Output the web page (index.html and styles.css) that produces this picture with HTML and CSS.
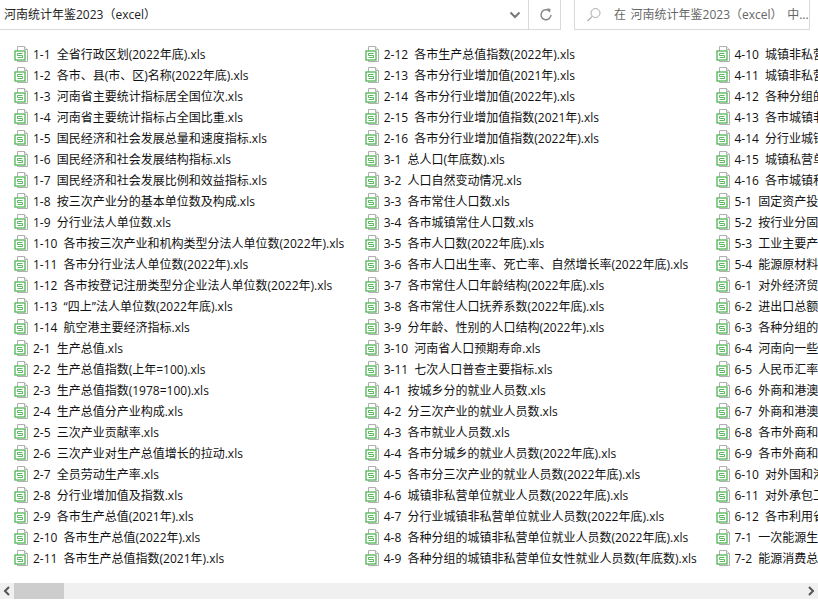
FILE: index.html
```html
<!DOCTYPE html>
<html lang="zh-CN">
<head>
<meta charset="utf-8">
<title>河南统计年鉴2023（excel）</title>
<link rel="stylesheet" href="styles.css">
</head>
<body>
<svg class="defs" width="0" height="0" aria-hidden="true">
  <symbol id="xls" viewBox="0 0 16 16">
    <path d="M3.5 .5H10.5L13.5 3.5V15.5H3.5Z" fill="#fff" stroke="#b0b0b0"/>
    <path d="M10.5 .5V3.5H13.5" fill="#f0f0f0" stroke="#b0b0b0"/>
    <rect x="1" y="5" width="10" height="9" fill="#fff" stroke="#4fb554" stroke-width="1.3"/>
    <path d="M8.5 7.5H3.5V9.5H8.5V11.5H3.5" fill="none" stroke="#5cb560"/>
  </symbol>
</svg>
<div class="window">
  <header class="toolbar">
    <div class="address">
      <span class="path">河南统计年鉴2023（excel）</span>
      <span class="dropdown"><svg width="12" height="8" viewBox="0 0 12 8"><path d="M1.5 1.5L6 6L10.5 1.5" fill="none" stroke="#777" stroke-width="2"/></svg></span>
      <span class="refresh"><svg width="14" height="14" viewBox="0 0 14 14"><path d="M10.6 3.2A5 5 0 1 0 12 7" fill="none" stroke="#888" stroke-width="1.5"/><path d="M7.5 .5L11.5 .8L11 4.8Z" fill="#888"/></svg></span>
    </div>
    <div class="search">
      <svg width="16" height="16" viewBox="0 0 16 16"><circle cx="9.5" cy="6" r="4.5" fill="none" stroke="#aaa"/><path d="M6.2 9.3L1.5 14" stroke="#aaa" stroke-width="1.2"/></svg>
      <span class="hint">在 河南统计年鉴2023（excel） 中...</span>
    </div>
  </header>
  <main class="files">
    <div class="file"><svg class="icon"><use href="#xls"/></svg><span>1-1 全省行政区划(2022年底).xls</span></div>
    <div class="file"><svg class="icon"><use href="#xls"/></svg><span>1-2 各市、县(市、区)名称(2022年底).xls</span></div>
    <div class="file"><svg class="icon"><use href="#xls"/></svg><span>1-3 河南省主要统计指标居全国位次.xls</span></div>
    <div class="file"><svg class="icon"><use href="#xls"/></svg><span>1-4 河南省主要统计指标占全国比重.xls</span></div>
    <div class="file"><svg class="icon"><use href="#xls"/></svg><span>1-5 国民经济和社会发展总量和速度指标.xls</span></div>
    <div class="file"><svg class="icon"><use href="#xls"/></svg><span>1-6 国民经济和社会发展结构指标.xls</span></div>
    <div class="file"><svg class="icon"><use href="#xls"/></svg><span>1-7 国民经济和社会发展比例和效益指标.xls</span></div>
    <div class="file"><svg class="icon"><use href="#xls"/></svg><span>1-8 按三次产业分的基本单位数及构成.xls</span></div>
    <div class="file"><svg class="icon"><use href="#xls"/></svg><span>1-9 分行业法人单位数.xls</span></div>
    <div class="file"><svg class="icon"><use href="#xls"/></svg><span>1-10 各市按三次产业和机构类型分法人单位数(2022年).xls</span></div>
    <div class="file"><svg class="icon"><use href="#xls"/></svg><span>1-11 各市分行业法人单位数(2022年).xls</span></div>
    <div class="file"><svg class="icon"><use href="#xls"/></svg><span>1-12 各市按登记注册类型分企业法人单位数(2022年).xls</span></div>
    <div class="file"><svg class="icon"><use href="#xls"/></svg><span>1-13 “四上”法人单位数(2022年底).xls</span></div>
    <div class="file"><svg class="icon"><use href="#xls"/></svg><span>1-14 航空港主要经济指标.xls</span></div>
    <div class="file"><svg class="icon"><use href="#xls"/></svg><span>2-1 生产总值.xls</span></div>
    <div class="file"><svg class="icon"><use href="#xls"/></svg><span>2-2 生产总值指数(上年=100).xls</span></div>
    <div class="file"><svg class="icon"><use href="#xls"/></svg><span>2-3 生产总值指数(1978=100).xls</span></div>
    <div class="file"><svg class="icon"><use href="#xls"/></svg><span>2-4 生产总值分产业构成.xls</span></div>
    <div class="file"><svg class="icon"><use href="#xls"/></svg><span>2-5 三次产业贡献率.xls</span></div>
    <div class="file"><svg class="icon"><use href="#xls"/></svg><span>2-6 三次产业对生产总值增长的拉动.xls</span></div>
    <div class="file"><svg class="icon"><use href="#xls"/></svg><span>2-7 全员劳动生产率.xls</span></div>
    <div class="file"><svg class="icon"><use href="#xls"/></svg><span>2-8 分行业增加值及指数.xls</span></div>
    <div class="file"><svg class="icon"><use href="#xls"/></svg><span>2-9 各市生产总值(2021年).xls</span></div>
    <div class="file"><svg class="icon"><use href="#xls"/></svg><span>2-10 各市生产总值(2022年).xls</span></div>
    <div class="file"><svg class="icon"><use href="#xls"/></svg><span>2-11 各市生产总值指数(2021年).xls</span></div>

    <div class="file"><svg class="icon"><use href="#xls"/></svg><span>2-12 各市生产总值指数(2022年).xls</span></div>
    <div class="file"><svg class="icon"><use href="#xls"/></svg><span>2-13 各市分行业增加值(2021年).xls</span></div>
    <div class="file"><svg class="icon"><use href="#xls"/></svg><span>2-14 各市分行业增加值(2022年).xls</span></div>
    <div class="file"><svg class="icon"><use href="#xls"/></svg><span>2-15 各市分行业增加值指数(2021年).xls</span></div>
    <div class="file"><svg class="icon"><use href="#xls"/></svg><span>2-16 各市分行业增加值指数(2022年).xls</span></div>
    <div class="file"><svg class="icon"><use href="#xls"/></svg><span>3-1 总人口(年底数).xls</span></div>
    <div class="file"><svg class="icon"><use href="#xls"/></svg><span>3-2 人口自然变动情况.xls</span></div>
    <div class="file"><svg class="icon"><use href="#xls"/></svg><span>3-3 各市常住人口数.xls</span></div>
    <div class="file"><svg class="icon"><use href="#xls"/></svg><span>3-4 各市城镇常住人口数.xls</span></div>
    <div class="file"><svg class="icon"><use href="#xls"/></svg><span>3-5 各市人口数(2022年底).xls</span></div>
    <div class="file"><svg class="icon"><use href="#xls"/></svg><span>3-6 各市人口出生率、死亡率、自然增长率(2022年底).xls</span></div>
    <div class="file"><svg class="icon"><use href="#xls"/></svg><span>3-7 各市常住人口年龄结构(2022年底).xls</span></div>
    <div class="file"><svg class="icon"><use href="#xls"/></svg><span>3-8 各市常住人口抚养系数(2022年底).xls</span></div>
    <div class="file"><svg class="icon"><use href="#xls"/></svg><span>3-9 分年龄、性别的人口结构(2022年).xls</span></div>
    <div class="file"><svg class="icon"><use href="#xls"/></svg><span>3-10 河南省人口预期寿命.xls</span></div>
    <div class="file"><svg class="icon"><use href="#xls"/></svg><span>3-11 七次人口普查主要指标.xls</span></div>
    <div class="file"><svg class="icon"><use href="#xls"/></svg><span>4-1 按城乡分的就业人员数.xls</span></div>
    <div class="file"><svg class="icon"><use href="#xls"/></svg><span>4-2 分三次产业的就业人员数.xls</span></div>
    <div class="file"><svg class="icon"><use href="#xls"/></svg><span>4-3 各市就业人员数.xls</span></div>
    <div class="file"><svg class="icon"><use href="#xls"/></svg><span>4-4 各市分城乡的就业人员数(2022年底).xls</span></div>
    <div class="file"><svg class="icon"><use href="#xls"/></svg><span>4-5 各市分三次产业的就业人员数(2022年底).xls</span></div>
    <div class="file"><svg class="icon"><use href="#xls"/></svg><span>4-6 城镇非私营单位就业人员数(2022年底).xls</span></div>
    <div class="file"><svg class="icon"><use href="#xls"/></svg><span>4-7 分行业城镇非私营单位就业人员数(2022年底).xls</span></div>
    <div class="file"><svg class="icon"><use href="#xls"/></svg><span>4-8 各种分组的城镇非私营单位就业人员数(2022年底).xls</span></div>
    <div class="file"><svg class="icon"><use href="#xls"/></svg><span>4-9 各种分组的城镇非私营单位女性就业人员数(年底数).xls</span></div>

    <div class="file"><svg class="icon"><use href="#xls"/></svg><span>4-10 城镇非私营单位</span></div>
    <div class="file"><svg class="icon"><use href="#xls"/></svg><span>4-11 城镇非私营单位</span></div>
    <div class="file"><svg class="icon"><use href="#xls"/></svg><span>4-12 各种分组的城镇</span></div>
    <div class="file"><svg class="icon"><use href="#xls"/></svg><span>4-13 各市城镇非私营</span></div>
    <div class="file"><svg class="icon"><use href="#xls"/></svg><span>4-14 分行业城镇私营</span></div>
    <div class="file"><svg class="icon"><use href="#xls"/></svg><span>4-15 城镇私营单位就</span></div>
    <div class="file"><svg class="icon"><use href="#xls"/></svg><span>4-16 各市城镇私营单</span></div>
    <div class="file"><svg class="icon"><use href="#xls"/></svg><span>5-1 固定资产投资主要</span></div>
    <div class="file"><svg class="icon"><use href="#xls"/></svg><span>5-2 按行业分固定资产</span></div>
    <div class="file"><svg class="icon"><use href="#xls"/></svg><span>5-3 工业主要产品产量</span></div>
    <div class="file"><svg class="icon"><use href="#xls"/></svg><span>5-4 能源原材料工业</span></div>
    <div class="file"><svg class="icon"><use href="#xls"/></svg><span>6-1 对外经济贸易主要</span></div>
    <div class="file"><svg class="icon"><use href="#xls"/></svg><span>6-2 进出口总额及增长</span></div>
    <div class="file"><svg class="icon"><use href="#xls"/></svg><span>6-3 各种分组的进出口</span></div>
    <div class="file"><svg class="icon"><use href="#xls"/></svg><span>6-4 河南向一些国家</span></div>
    <div class="file"><svg class="icon"><use href="#xls"/></svg><span>6-5 人民币汇率变化</span></div>
    <div class="file"><svg class="icon"><use href="#xls"/></svg><span>6-6 外商和港澳台商投</span></div>
    <div class="file"><svg class="icon"><use href="#xls"/></svg><span>6-7 外商和港澳台商投</span></div>
    <div class="file"><svg class="icon"><use href="#xls"/></svg><span>6-8 各市外商和港澳台</span></div>
    <div class="file"><svg class="icon"><use href="#xls"/></svg><span>6-9 各市外商和港澳台</span></div>
    <div class="file"><svg class="icon"><use href="#xls"/></svg><span>6-10 对外国和港澳台</span></div>
    <div class="file"><svg class="icon"><use href="#xls"/></svg><span>6-11 对外承包工程和</span></div>
    <div class="file"><svg class="icon"><use href="#xls"/></svg><span>6-12 各市利用省外资</span></div>
    <div class="file"><svg class="icon"><use href="#xls"/></svg><span>7-1 一次能源生产总量</span></div>
    <div class="file"><svg class="icon"><use href="#xls"/></svg><span>7-2 能源消费总量及构</span></div>
  </main>
  <div class="scrollbar">
    <span class="arrow"><svg width="8" height="10" viewBox="0 0 8 10"><path d="M6 1L2 5L6 9" fill="none" stroke="#555" stroke-width="2"/></svg></span>
    <span class="thumb"></span>
    <span class="track"></span>
    <span class="arrow"><svg width="8" height="10" viewBox="0 0 8 10"><path d="M2 1L6 5L2 9" fill="none" stroke="#555" stroke-width="2"/></svg></span>
  </div>
</div>
</body>
</html>
```
FILE: styles.css
```css
* { box-sizing: border-box; }
html, body { margin: 0; height: 100%; background: #fff; overflow: hidden; }
body {
  font-family: "Open Sans", "Noto Sans CJK SC", sans-serif;
  font-size: 12px;
  color: #111;
}
.defs { display: block; height: 0; }
.window { display: flex; flex-direction: column; width: 818px; height: 601px; }
.toolbar { display: flex; height: 30px; flex: none; gap: 13px; padding-right: 8px; }
.address { display: flex; width: 561px; height: 30px; border-bottom: 1px solid #d9d9d9; border-right: 1px solid #d9d9d9; align-items: center; }
.path { flex: 1; padding: 0 0 2px 4px; color: #222; }
.dropdown, .refresh { display: flex; align-items: center; justify-content: center; height: 29px; }
.dropdown { width: 32px; padding-left: 4px; border-right: 1px solid #d9d9d9; }
.refresh { width: 31px; padding-left: 2px; }
.search { flex: 1; display: flex; align-items: center; height: 30px; border: 1px solid #d9d9d9; border-top: 0; padding-left: 11px; gap: 12px; }
.hint { color: #666; white-space: nowrap; overflow: hidden; word-spacing: 1.5px; padding-bottom: 1px; }
.files {
  flex: 1;
  display: grid;
  grid-auto-flow: column;
  grid-template-rows: repeat(25, 21px);
  grid-auto-columns: 350.75px;
  padding: 13px 0 0 14px;
  overflow: hidden;
  min-height: 0;
}
.file { display: flex; align-items: center; gap: 3px; white-space: nowrap; min-width: 0; word-spacing: 3px; }
.icon { width: 16px; height: 16px; flex: none; }
.scrollbar { flex: none; display: flex; height: 16px; margin-bottom: 2px; background: #f0f0f0; }
.arrow { width: 14px; display: flex; align-items: center; justify-content: center; }
.thumb { width: 50px; background: #cdcdcd; }
.track { flex: 1; }
```
